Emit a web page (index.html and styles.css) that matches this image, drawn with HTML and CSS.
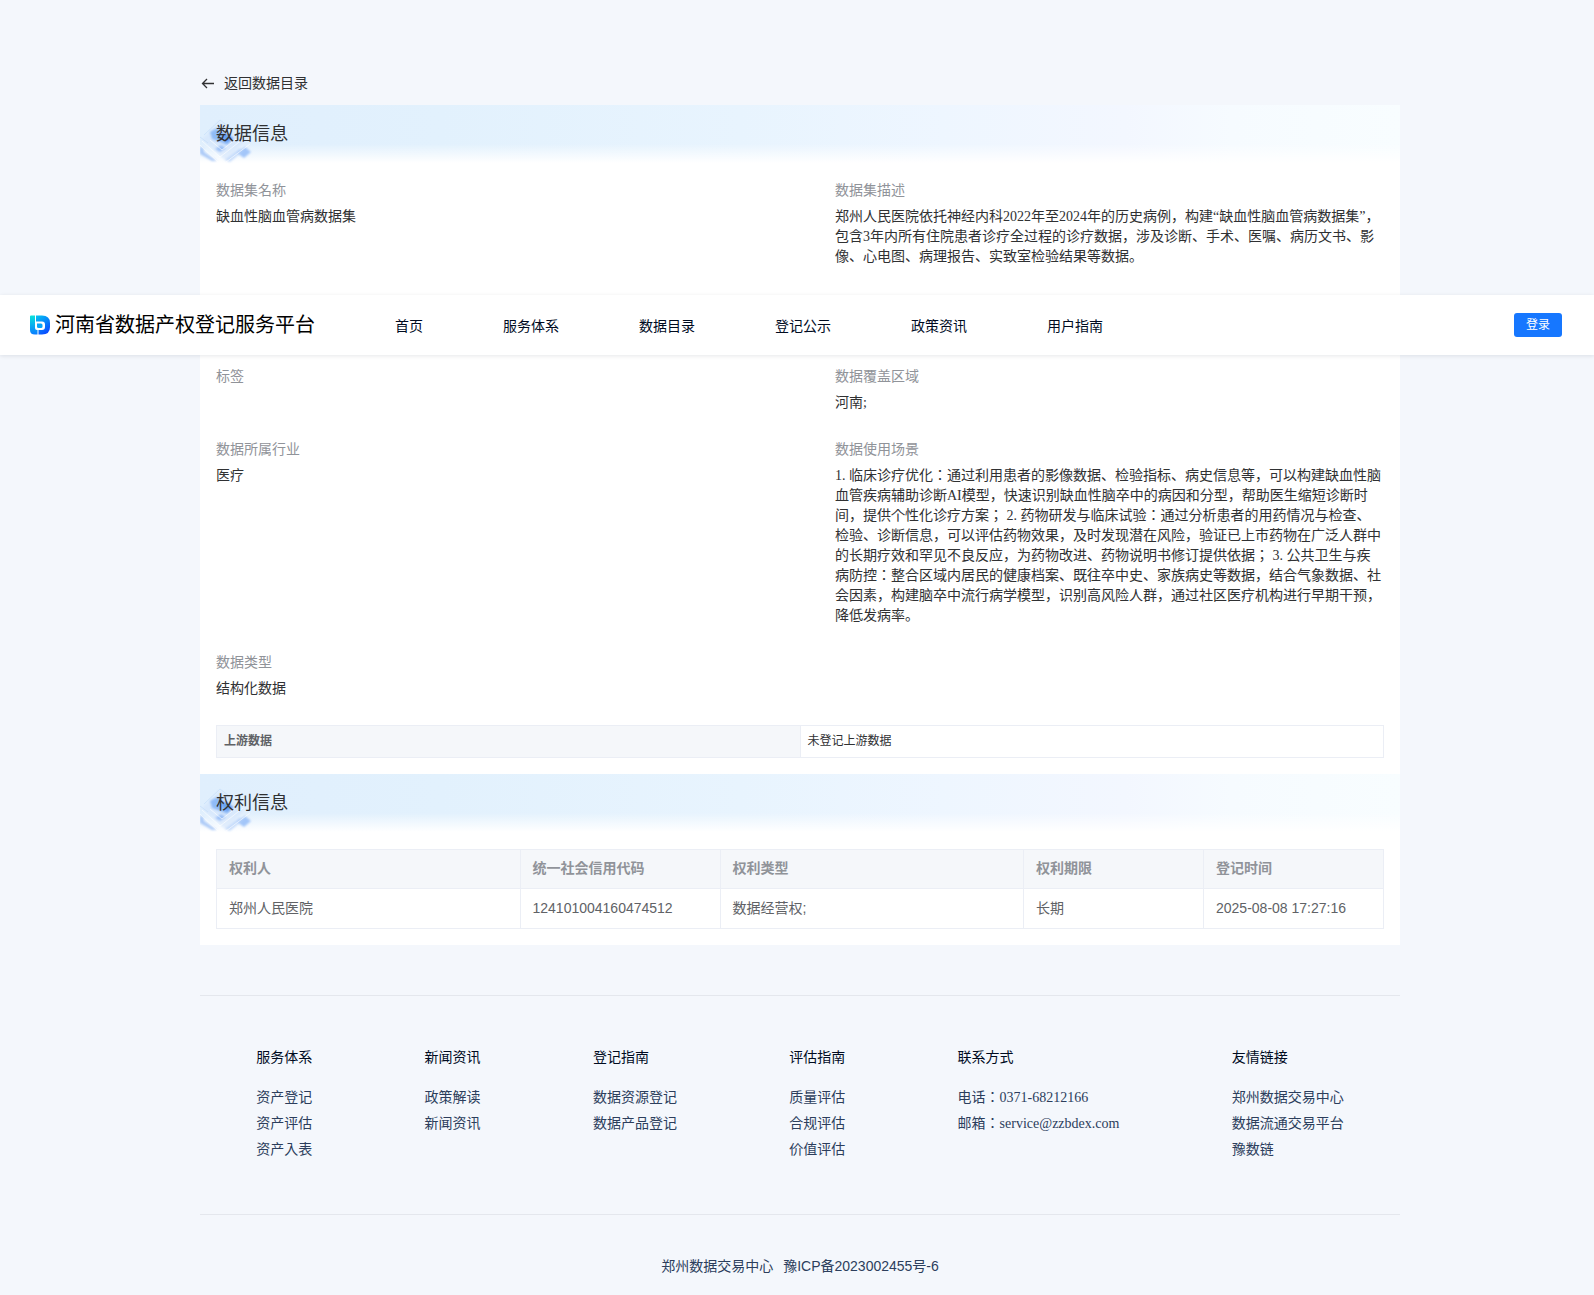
FILE: index.html
```
<!DOCTYPE html>
<html lang="en">
<head>
  <meta charset="UTF-8" />
  <meta name="viewport" content="width=device-width, initial-scale=1.0"/>
  <title>河南省数据产权登记服务平台</title>
  <link rel="stylesheet" href="styles.css">
</head>
<body>

  <header class="header">
    <svg class="logo" viewBox="0 0 20 20" aria-hidden="true">
      <defs>
        <linearGradient id="logoLeft" x1="0" y1="0" x2="0" y2="1">
          <stop offset="0" stop-color="#08e3dc"/>
          <stop offset="1" stop-color="#0a7cff"/>
        </linearGradient>
        <linearGradient id="logoRight" x1="0" y1="0" x2="0.6" y2="1">
          <stop offset="0" stop-color="#04c6f2"/>
          <stop offset="1" stop-color="#0a4dff"/>
        </linearGradient>
      </defs>
      <path fill="url(#logoLeft)" d="M0 1.5Q0 0.5 1 0.5H5V13Q5 15 7 15H7.500V19.500H5Q0 19.500 0 15Z"/>
      <path fill="url(#logoRight)" d="M6 0.5H12Q20 0.5 20 8V12Q20 19.500 12 19.500H8.500V15H12Q15 15 15 12V9.500Q15 6.500 12 6.500H6Z"/>
      <path fill="#06a5fa" d="M7 8.500H11Q12.500 8.500 12.500 10V11.500Q12.500 13 11 13H8.500Q7 13 7 11.500Z"/>
    </svg>
    <div class="site-name">河南省数据产权登记服务平台</div>
    <nav class="nav">
      <a href="#">首页</a>
      <a href="#">服务体系</a>
      <a href="#">数据目录</a>
      <a href="#">登记公示</a>
      <a href="#">政策资讯</a>
      <a href="#">用户指南</a>
    </nav>
    <button class="login-btn" type="button">登录</button>
  </header>

  <!-- banner decoration, used by both section titles -->
  <svg class="defs" width="0" height="0" aria-hidden="true">
    <defs>
      <filter id="soft"><feGaussianBlur stdDeviation="1.300"/></filter>
      <symbol id="blocks" viewBox="0 0 56 59">
        <g filter="url(#soft)">
          <path fill="#d3e5fc" d="M2 34L20 17L44 36L26 56Z" opacity="0.6"/>
          <path fill="#8fbbf7" d="M10 27L17 23L34 33L27 40L20 37L12 34Z"/>
          <path fill="#4f8ff0" d="M21 30L27 28L33 33L27 38Z" opacity="0.6"/>
          <path fill="#8fb9f7" d="M15 44L21 40L26 43L20 47Z" opacity="0.8"/>
          <path fill="#a3c6f9" d="M37 48L45 42L51 47L44 53Z"/>
          <path fill="#8fb6f5" d="M0 42L3 43L4 47L17 56H12L0 49Z" opacity="0.7"/>
          <path fill="#b4d0f9" d="M25 55L40 43L43 46L30 57Z" opacity="0.7"/>
        </g>
        <g fill="none" stroke="#fff" opacity="0.6">
          <path d="M2 36L20 52L43 34"/>
          <path d="M0 40L18 57"/>
          <path d="M10 35L22 45L36 34"/>
          <path d="M26 57L50 39"/>
        </g>
        <g fill="none" stroke="#bcd8f7" opacity="0.5">
          <path d="M4 30L20 15L32 24"/>
          <path d="M0 32L8 38"/>
        </g>
      </symbol>
    </defs>
  </svg>

  <main class="container">
    <a class="back" href="#">
      <svg class="back-icon" viewBox="0 0 16 16" aria-hidden="true">
        <path d="M14 7.500H2.500M7 3L2.500 7.500L7 12" fill="none" stroke="currentColor" stroke-width="1.300"/>
      </svg>
      返回数据目录
    </a>

    <div class="panel">
      <div class="banner">
        <svg class="banner-art" aria-hidden="true"><use href="#blocks"/></svg>
        <h2>数据信息</h2>
      </div>

      <dl class="info">
        <div class="field">
          <dt>数据集名称</dt>
          <dd>缺血性脑血管病数据集</dd>
        </div>
        <div class="field">
          <dt>数据集描述</dt>
          <dd>郑州人民医院依托神经内科2022年至2024年的历史病例，构建“缺血性脑血管病数据集”，包含3年内所有住院患者诊疗全过程的诊疗数据，涉及诊断、手术、医嘱、病历文书、影像、心电图、病理报告、实致室检验结果等数据。</dd>
        </div>
        <div class="field"><dt></dt><dd></dd></div>
        <div class="field"><dt></dt><dd></dd></div>
        <div class="field">
          <dt>标签</dt>
          <dd></dd>
        </div>
        <div class="field">
          <dt>数据覆盖区域</dt>
          <dd>河南;</dd>
        </div>
        <div class="field">
          <dt>数据所属行业</dt>
          <dd>医疗</dd>
        </div>
        <div class="field">
          <dt>数据使用场景</dt>
          <dd>1. 临床诊疗优化：通过利用患者的影像数据、检验指标、病史信息等，可以构建缺血性脑血管疾病辅助诊断AI模型，快速识别缺血性脑卒中的病因和分型，帮助医生缩短诊断时间，提供个性化诊疗方案； 2. 药物研发与临床试验：通过分析患者的用药情况与检查、检验、诊断信息，可以评估药物效果，及时发现潜在风险，验证已上市药物在广泛人群中的长期疗效和罕见不良反应，为药物改进、药物说明书修订提供依据； 3. 公共卫生与疾病防控：整合区域内居民的健康档案、既往卒中史、家族病史等数据，结合气象数据、社会因素，构建脑卒中流行病学模型，识别高风险人群，通过社区医疗机构进行早期干预，降低发病率。</dd>
        </div>
        <div class="field">
          <dt>数据类型</dt>
          <dd>结构化数据</dd>
        </div>
      </dl>

      <table class="upstream">
        <tr>
          <th scope="row">上游数据</th>
          <td>未登记上游数据</td>
        </tr>
      </table>

      <div class="banner">
        <svg class="banner-art" aria-hidden="true"><use href="#blocks"/></svg>
        <h2>权利信息</h2>
      </div>

      <table class="rights">
        <colgroup>
          <col>
          <col class="col-code">
          <col>
          <col class="col-date">
          <col class="col-date">
        </colgroup>
        <thead>
          <tr>
            <th>权利人</th>
            <th>统一社会信用代码</th>
            <th>权利类型</th>
            <th>权利期限</th>
            <th>登记时间</th>
          </tr>
        </thead>
        <tbody>
          <tr>
            <td>郑州人民医院</td>
            <td>124101004160474512</td>
            <td>数据经营权;</td>
            <td>长期</td>
            <td>2025-08-08 17:27:16</td>
          </tr>
        </tbody>
      </table>
    </div>
  </main>

  <footer class="container footer">
    <div class="footer-links">
      <div class="footer-col">
        <h3>服务体系</h3>
        <a href="#">资产登记</a>
        <a href="#">资产评估</a>
        <a href="#">资产入表</a>
      </div>
      <div class="footer-col">
        <h3>新闻资讯</h3>
        <a href="#">政策解读</a>
        <a href="#">新闻资讯</a>
      </div>
      <div class="footer-col">
        <h3>登记指南</h3>
        <a href="#">数据资源登记</a>
        <a href="#">数据产品登记</a>
      </div>
      <div class="footer-col">
        <h3>评估指南</h3>
        <a href="#">质量评估</a>
        <a href="#">合规评估</a>
        <a href="#">价值评估</a>
      </div>
      <div class="footer-col">
        <h3>联系方式</h3>
        <p>电话：0371-68212166</p>
        <p>邮箱：service@zzbdex.com</p>
      </div>
      <div class="footer-col">
        <h3>友情链接</h3>
        <a href="#">郑州数据交易中心</a>
        <a href="#">数据流通交易平台</a>
        <a href="#">豫数链</a>
      </div>
    </div>
    <div class="copyright">
      <span>郑州数据交易中心</span>
      <a href="#">豫ICP备2023002455号-6</a>
    </div>
  </footer>

</body>
</html>
```
FILE: styles.css
```
* {
  box-sizing: border-box;
}

body {
  margin: 0;
  padding-left: 6px;
  background-color: #f4f7fc;
  color: #303133;
  font-family: "Liberation Serif", "Noto Sans CJK JP", serif;
  font-size: 14px;
  line-height: 20px;
}

a {
  color: inherit;
  text-decoration: none;
}

h2, h3, p, dl, dd {
  margin: 0;
  font-weight: normal;
}

.defs {
  display: block;
}

.container {
  max-width: 1200px;
  margin: 0 auto;
}

/* header floats over the page */
.header {
  position: absolute;
  top: 295px;
  left: 0;
  right: 0;
  z-index: 10;
  display: flex;
  align-items: center;
  height: 60px;
  padding: 0 32px 0 30px;
  background-color: #fff;
  box-shadow: 0 1px 4px rgba(0, 21, 41, 0.1);
  color: #000b1f;
}

.logo {
  width: 20px;
  height: 20px;
  margin-right: 5px;
}

.site-name {
  color: #000;
  font-size: 20px;
  line-height: 28px;
}

.nav {
  display: flex;
  gap: 80px;
  flex: 1;
  margin-left: 80px;
  padding-top: 4px;
}

.login-btn {
  width: 48px;
  height: 24px;
  padding: 0;
  border: none;
  border-radius: 3px;
  background-color: #1677ff;
  color: #fff;
  font-family: "Liberation Sans", "Noto Sans CJK JP", sans-serif;
  font-size: 12px;
  line-height: 24px;
  cursor: pointer;
}

.back {
  display: flex;
  align-items: center;
  gap: 8px;
  padding: 74px 0 11px;
}

.back-icon {
  width: 16px;
  height: 16px;
}

.panel {
  padding-bottom: 16px;
  background-color: #fff;
}

.banner {
  position: relative;
  height: 59px;
  padding: 15px 16px;
  background:
    linear-gradient(to bottom, rgba(255, 255, 255, 0) 66%, #fff 98%),
    linear-gradient(to right, #e0effd 0%, #e2f1fd 20%, #e8f4fe 45%, #eef6ff 62%, #f3f7ff 77%, #f6fbff 86%, #f8fdff 100%);
}

.banner-art {
  position: absolute;
  top: 0;
  left: 0;
  width: 56px;
  height: 59px;
}

.banner h2 {
  position: relative;
  font-size: 18px;
  line-height: 28px;
}

.info {
  display: grid;
  grid-template-columns: 1fr 1fr;
  column-gap: 70px;
  row-gap: 27px;
  padding: 17px 16px 26px;
}

.field dt {
  min-height: 20px;
  margin-bottom: 6px;
  color: #909399;
}

.field dd {
  min-height: 20px;
}

table {
  width: calc(100% - 32px);
  margin: 0 16px;
  border-collapse: collapse;
  table-layout: fixed;
  font-family: "Liberation Sans", "Noto Sans CJK JP", sans-serif;
  text-align: left;
}

th, td {
  border: 1px solid #ebeef5;
}

th {
  background-color: #f5f7fa;
}

.upstream {
  margin-bottom: 16px;
  font-size: 12px;
}

.upstream th, .upstream td {
  padding: 5px 7px 6px;
}

.upstream th {
  color: #606266;
}

.rights {
  margin-top: 16px;
  color: #606266;
}

.rights th {
  padding: 8px 12px 10px;
  color: #909399;
}

.rights td {
  padding: 9px 12px 10px;
}

.col-code {
  width: 200px;
}

.col-date {
  width: 180px;
}

.footer {
  margin-top: 50px;
  color: #2c3e5c;
}

.footer-links {
  display: flex;
  justify-content: space-around;
  padding: 52px 0 51px;
  border-top: 1px solid #e4e7ed;
  border-bottom: 1px solid #e4e7ed;
}

.footer-col a, .footer-col p {
  display: block;
  line-height: 26px;
}

.footer-col h3 {
  margin-bottom: 17px;
  color: #000b1f;
  font-size: 14px;
}

.copyright {
  display: flex;
  justify-content: center;
  gap: 10px;
  padding: 41px 0 19px;
  font-family: "Liberation Sans", "Noto Sans CJK JP", sans-serif;
}
```
